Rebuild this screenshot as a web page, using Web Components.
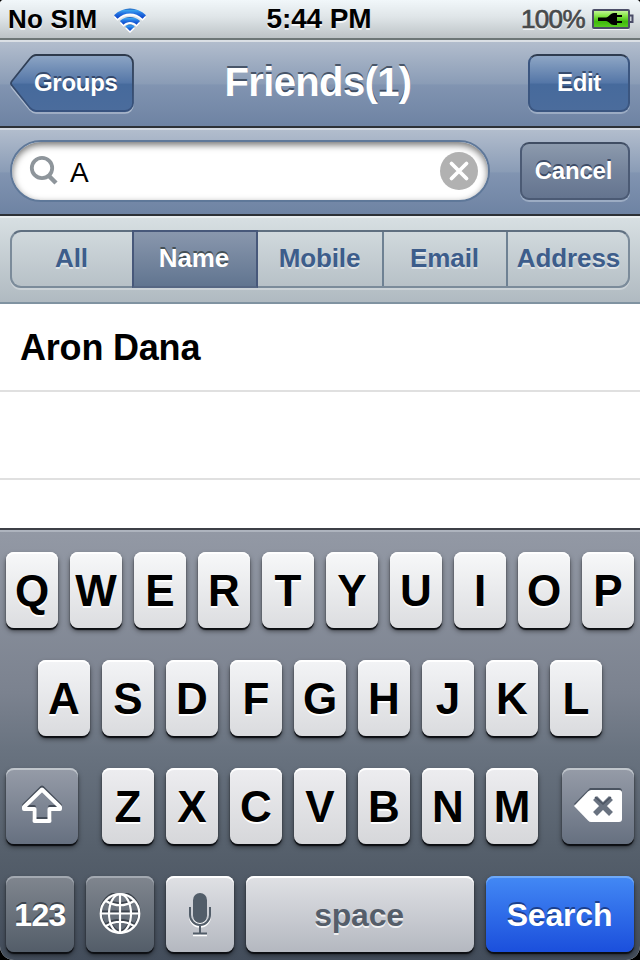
<!DOCTYPE html>
<html lang="en">
<head>
<meta charset="utf-8">
<title>Friends</title>
<style>
  body {
    margin: 0;
    background: #000;
    font-family: "Liberation Sans", Arial, Helvetica, sans-serif;
  }
</style>
</head>
<body>
<phone-screen>
  <status-bar carrier="No SIM" time="5:44 PM" battery="100%"></status-bar>
  <nav-bar>
    <back-button slot="left">Groups</back-button>
    Friends(1)
    <bar-button slot="right" style="width: 102px">Edit</bar-button>
  </nav-bar>
  <search-bar>
    <search-field>A</search-field>
    <bar-button muted style="width: 110px">Cancel</bar-button>
  </search-bar>
  <scope-bar>
    <scope-item>All</scope-item>
    <scope-item selected>Name</scope-item>
    <scope-item>Mobile</scope-item>
    <scope-item>Email</scope-item>
    <scope-item>Address</scope-item>
  </scope-bar>
  <contact-list>
    <contact-row>Aron Dana</contact-row>
    <contact-row></contact-row>
    <contact-row></contact-row>
  </contact-list>
  <key-board></key-board>
</phone-screen>

<script>
function define(name, html) {
  customElements.define(
    name,
    class extends HTMLElement {
      constructor() {
        super();
        this.attachShadow({ mode: "open" }).innerHTML = html;
      }
    }
  );
}

define("phone-screen", `
<style>
  :host {
    display: flex;
    flex-direction: column;
    width: 640px;
    height: 960px;
    overflow: hidden;
    border-radius: 4px 4px 14px 14px;
    background: #fff;
  }
</style>
<slot></slot>
`);

customElements.define(
  "status-bar",
  class extends HTMLElement {
    constructor() {
      super();
      const shadowRoot = this.attachShadow({ mode: "open" });
      shadowRoot.innerHTML = `
<style>
  :host {
    display: grid;
    grid-template-columns: 1fr auto 1fr;
    align-items: center;
    box-sizing: border-box;
    height: 40px;
    padding: 0 6px 0 8px;
    border-bottom: 2px solid #6d7777;
    background: linear-gradient(#f1f7fa, #dfe5e8 45%, #bcc3c6);
    font-weight: bold;
    font-size: 26px;
    line-height: 38px;
    text-shadow: 0 2px 0 rgba(255, 255, 255, .75);
    white-space: nowrap;
  }
  .left, .right { display: flex; align-items: center; }
  .left { letter-spacing: .2px; }
  .left svg { margin: 1px 0 0 16px; }
  .time { font-size: 28px; letter-spacing: -.1px; padding: 0 4px 0 0; }
  .right {
    justify-content: flex-end;
    color: #484a4b;
    font-weight: normal;
    -webkit-text-stroke: .7px #484a4b;
    letter-spacing: -.6px;
  }
  .right svg { margin: 0 0 1px 7px; }
</style>
<div class="left"><span class="carrier"></span>
  <svg width="34" height="26" viewBox="0 0 34 26">
    <defs>
      <linearGradient id="w" x1="0" y1="0" x2="0" y2="1">
        <stop offset="0" stop-color="#1a57b4"/><stop offset=".2" stop-color="#38a0ee"/>
        <stop offset=".5" stop-color="#2272e0"/><stop offset="1" stop-color="#0a40c8"/>
      </linearGradient>
    </defs>
    <g fill="#fff" transform="translate(0 2)">
      <path d="M1 8.200C10 -.8 24 -.8 33 8.200L29.500 11.700C22.500 4.700 11.500 4.700 4.500 11.700z"/>
      <path d="M6.900 14.100C12.500 8.600 21.500 8.600 27.100 14.100L23.500 17.700C20 14.200 14 14.200 10.500 17.700z"/>
      <path d="M12.300 19.400C15 17 19 17 21.700 19.400L17 24z"/>
    </g>
    <g fill="url(#w)">
      <path d="M1 8.200C10 -.8 24 -.8 33 8.200L29.500 11.700C22.500 4.700 11.500 4.700 4.500 11.700z"/>
      <path d="M6.900 14.100C12.500 8.600 21.500 8.600 27.100 14.100L23.500 17.700C20 14.200 14 14.200 10.500 17.700z"/>
      <path d="M12.300 19.400C15 17 19 17 21.700 19.400L17 24z"/>
    </g>
  </svg>
</div>
<span class="time"></span>
<div class="right"><span class="battery"></span>
  <svg width="42" height="22" viewBox="0 0 42 22">
    <defs>
      <linearGradient id="b" x1="0" y1="0" x2="0" y2="1">
        <stop offset="0" stop-color="#cdf5a6"/><stop offset=".3" stop-color="#8be84c"/>
        <stop offset=".65" stop-color="#3fb90c"/><stop offset="1" stop-color="#5ccf25"/>
      </linearGradient>
    </defs>
    <path d="M1 21.500H37" stroke="#fff" opacity=".8"/>
    <rect x="1" y="2" width="36" height="18" rx="1" fill="url(#b)" stroke="#4b4d68" stroke-width="2"/>
    <path d="M38 7.500h2.500v6.500H38" fill="#cdd3d8" stroke="#4b4d68" stroke-width="2"/>
    <path d="M6 9.500h8c3 0 4-4.500 8-4.500h3v2h5v2h-5v4h5v2h-5v2h-3c-4 0-5-4-8-4H6z" fill="#000"/>
  </svg>
</div>
`;
      for (const name of ["carrier", "time", "battery"]) {
        shadowRoot.querySelector("." + name).textContent = this.getAttribute(name);
      }
    }
  }
);

define("nav-bar", `
<style>
  :host {
    display: grid;
    grid-template-columns: 134px 1fr 134px;
    align-items: center;
    box-sizing: border-box;
    height: 88px;
    padding: 0 10px 2px;
    border-top: 2px solid #dbe0e5;
    border-bottom: 2px solid #2d3136;
    background: linear-gradient(#b2bdcd, #8a9cb6 50%, #8194b1 51%, #6e83a3);
  }
  .title {
    color: #fff;
    font-size: 40px;
    line-height: 78px;
    font-weight: bold;
    letter-spacing: -.65px;
    text-align: center;
    text-shadow: 0 -2px 0 rgba(35, 48, 66, .7);
    padding: 0 4px 2px 0;
  }
  .right { display: flex; justify-content: flex-end; }
</style>
<slot name="left"></slot>
<div class="title"><slot></slot></div>
<div class="right"><slot name="right"></slot></div>
`);

define("back-button", `
<style>
  :host {
    display: grid;
    width: 126px;
    height: 60px;
    padding-top: 2px;
    color: #fff;
    font-size: 24px;
    font-weight: bold;
    line-height: 56px;
    text-shadow: 0 -2px 0 rgba(25, 40, 70, .65);
  }
  svg, span { grid-area: 1 / 1; }
  span { padding-left: 24px; letter-spacing: -.3px; padding-top: 1px; }
</style>
<svg width="126" height="60" viewBox="0 0 126 60">
  <defs>
    <linearGradient id="g" x1="0" y1="0" x2="0" y2="1">
      <stop offset="0" stop-color="#8ea6c5"/><stop offset=".5" stop-color="#5476a7"/>
      <stop offset=".52" stop-color="#466a9c"/><stop offset="1" stop-color="#4b6c9c"/>
    </linearGradient>
    <linearGradient id="s" x1="0" y1="0" x2="0" y2="1">
      <stop offset="0" stop-color="#2e3a4c"/><stop offset="1" stop-color="#38537f"/>
    </linearGradient>
  </defs>
  <path d="M26 1H115a8 8 0 0 1 8 8V49a8 8 0 0 1-8 8H26q-3 0-6-3L2.500 32.500Q0 29.500 2.500 26L20 4.500Q23 1 26 1z" transform="translate(0 2)" fill="none" stroke="#c3cddb" stroke-width="1.500" opacity=".7"/>
  <path d="M26 1H115a8 8 0 0 1 8 8V49a8 8 0 0 1-8 8H26q-3 0-6-3L2 31.500Q0 29.500 2 27L20 4.500Q23 1 26 1z" fill="url(#g)" stroke="url(#s)" stroke-width="1.800"/>
</svg>
<span><slot></slot></span>
`);

define("bar-button", `
<style>
  :host {
    display: block;
    box-sizing: border-box;
    height: 58px;
    flex: none;
    border: 2px solid #3b5680;
    border-top-color: #2f3c50;
    border-radius: 9px;
    background: linear-gradient(#8ea6c5, #5476a7 50%, #466a9c 52%, #4b6c9c);
    box-shadow: 0 2px 0 rgba(195, 207, 223, .5);
    color: #fff;
    font-size: 24px;
    font-weight: bold;
    line-height: 54px;
    letter-spacing: -.3px;
    text-align: center;
    text-shadow: 0 -2px 0 rgba(25, 40, 70, .65);
  }
  :host([muted]) {
    border-color: #4b5a74;
    border-top-color: #404d63;
    background: linear-gradient(#8c9aad, #75849c 50%, #64748f);
    letter-spacing: -.2px;
    text-indent: -3px;
  }
</style>
<slot></slot>
`);

define("search-bar", `
<style>
  :host {
    display: flex;
    align-items: center;
    justify-content: space-between;
    box-sizing: border-box;
    height: 88px;
    padding: 0 10px 2px;
    border-top: 2px solid #d3d9e1;
    border-bottom: 2px solid #2d3136;
    background: linear-gradient(#b2bdcd, #8a9cb6 50%, #8194b1 51%, #6e83a3);
  }
</style>
<slot></slot>
`);

define("search-field", `
<style>
  :host {
    display: flex;
    align-items: center;
    box-sizing: border-box;
    width: 480px;
    height: 62px;
    padding: 0 10px 1px 17px;
    border: 2px solid #5f7899;
    border-radius: 31px;
    background: #fff;
    box-shadow: inset 0 3px 7px rgba(0, 0, 0, .55);
    font-size: 28px;
    line-height: 56px;
  }
  span { flex: 1; padding-left: 11px; padding-top: 4px; }
</style>
<svg width="30" height="32" viewBox="0 0 30 32" fill="none" stroke="#8e959b">
  <circle cx="13" cy="13" r="10.200" stroke-width="3.800"/>
  <path d="M19.500 20.500L27 28" stroke-width="4.500"/>
</svg>
<span><slot></slot></span>
<svg width="38" height="38" viewBox="0 0 38 38">
  <circle cx="19" cy="19" r="19" fill="#b1b1b1"/>
  <path d="M11.500 11.500l15 15m0-15l-15 15" stroke="#fff" stroke-width="3.800" stroke-linecap="round"/>
</svg>
`);

define("scope-bar", `
<style>
  :host {
    display: block;
    box-sizing: border-box;
    height: 88px;
    padding: 12px 10px;
    border-top: 2px solid #e8edef;
    border-bottom: 2px solid #8093a1;
    background: linear-gradient(#d7dfe2, #b0bac1);
  }
  .group {
    display: grid;
    grid-template-columns: 120px 126px 126px 124px 1fr;
    box-sizing: border-box;
    height: 58px;
    border: 2px solid #7b8b9a;
    border-top-color: #5f6f80;
    border-radius: 11px;
    box-shadow: 0 2px 0 rgba(255, 255, 255, .3);
  }
</style>
<div class="group"><slot></slot></div>
`);

define("scope-item", `
<style>
  :host {
    display: block;
    box-sizing: border-box;
    color: #3d5d8b;
    border-right: 2px solid #6e8193;
    font-size: 26px;
    font-weight: bold;
    line-height: 52px;
    letter-spacing: -.1px;
    text-align: center;
    text-indent: -1px;
    text-shadow: 0 2px 0 rgba(255, 255, 255, .5);
    white-space: nowrap;
  }
  :host(:first-child), :host(:last-child) { border-right: none; }
  :host(:last-child) { padding-left: 2px; }
  :host([selected]) {
    margin: -2px 0;
    padding-right: 1px;
    border: 2px solid #47587a;
    border-bottom-color: #566783;
    background: linear-gradient(#8997ad, #617590);
    color: #fff;
    text-shadow: 0 -2px 0 rgba(50, 60, 60, .75);
  }
</style>
<slot></slot>
`);

define("contact-list", `
<style>
  :host {
    display: block;
    height: 224px;
    overflow: hidden;
    background: #fff;
  }
</style>
<slot></slot>
`);

define("contact-row", `
<style>
  :host {
    display: block;
    box-sizing: border-box;
    height: 88px;
    padding: 1px 20px 0;
    border-bottom: 2px solid #e0e0e0;
    font-size: 36px;
    font-weight: bold;
    line-height: 86px;
    letter-spacing: -.2px;
  }
</style>
<slot></slot>
`);

define("key-cap", `
<style>
  :host {
    --edge: #fff;
    display: flex;
    align-items: center;
    justify-content: center;
    box-sizing: border-box;
    width: 52px;
    height: 76px;
    padding-top: 2px;
    border-radius: 8px;
    background: linear-gradient(var(--top, #f7f8f9), var(--bottom, #dcdde0));
    box-shadow: inset 0 2px 0 var(--edge), 0 2px 1px #0c0e12, 0 3px 5px rgba(0, 0, 0, .5);
    color: #000;
    font-size: 44px;
    font-weight: bold;
    text-shadow: 0 2px 0 #fff;
  }
  :host([kind]) { width: 68px; font-size: 32px; }
  :host([kind="dark"]) {
    --top: #80868f;
    --bottom: #535d69;
    --edge: #a3a9b1;
    color: #fff;
    letter-spacing: -.6px;
    text-shadow: 0 -2px 0 #3c434c;
  }
  :host([kind="wide"]) {
    --top: #969ca8;
    --bottom: #667080;
    --edge: #c0c6cc;
    width: 72px;
    padding: 0 0 2px;
  }
  :host([kind="mic"]), :host([kind="space"]) {
    --top: #e0e1e5;
    --bottom: #b4b8c0;
    color: #555e6a;
    text-shadow: 0 2px 0 rgba(255, 255, 255, .8);
  }
  :host([kind="space"]) { width: 228px; letter-spacing: -.2px; padding-right: 2px; }
  :host([kind="search"]) {
    --top: #4389f5;
    --bottom: #1b4fdc;
    --edge: #6fa9f8;
    width: 148px;
    padding-right: 1px;
    color: #fff;
    letter-spacing: -.2px;
    text-shadow: 0 -2px 0 #1b3f8e;
  }
</style>
<slot></slot>
`);

const shiftIcon = `
<svg width="44" height="40" viewBox="0 0 44 40" fill="none" stroke-width="4" stroke-linejoin="round">
  <path d="M22 3.500L4 21.500V23H14V35H30V23H40V21.500z" transform="translate(0 -1)" stroke="#444c58"/>
  <path d="M22 4.500L4 22V24H14.500V36H29.500V24H40V22z" stroke="#fff"/>
</svg>`;

const deleteIcon = `
<svg width="48" height="34" viewBox="0 0 48 34">
  <path d="M16 0H45a3 3 0 0 1 3 3V30H16L0 16z" fill="#4a5360"/>
  <path d="M17 2H45a3 3 0 0 1 3 3V31a3 3 0 0 1-3 3H17q-1.500 0-3-1.500L.5 18.500v-1L14 3.500Q15.500 2 17 2z" fill="#fff"/>
  <path d="M21 10l16 16m0-16l-16 16" stroke="#697280" stroke-width="5.500"/>
  <path d="M21 9l8 7 8-7" fill="none" stroke="#4c5563" stroke-width="1.500"/>
</svg>`;

const globe = `
  <circle cx="21" cy="20.500" r="19.300"/>
  <ellipse cx="21" cy="20.500" rx="11" ry="19.300"/>
  <path d="M21 1.500V40M1.500 20.500H40.500M7 8Q21 16.500 35 8M7 33Q21 24.500 35 33"/>`;

const globeIcon = `
<svg width="42" height="44" viewBox="0 0 42 44" fill="none" stroke-width="2.200">
  <g stroke="#3c434c" transform="translate(0 -1.800)">${globe}</g>
  <g stroke="#fff">${globe}</g>
</svg>`;

const mic = `
  <rect x="5" y="0" width="14" height="30" rx="7" stroke="none"/>
  <path d="M2 14V22a10 10 0 0 0 20 0V14M12 32V40M5 40.500H19" fill="none" stroke-width="2"/>`;

const micIcon = `
<svg width="24" height="44" viewBox="0 0 24 44">
  <g fill="#fff" stroke="#fff" transform="translate(0 1.800)">${mic}</g>
  <g fill="#525d69" stroke="#525d69">${mic}</g>
</svg>`;

const letters = (text) =>
  [...text].map((letter) => `<key-cap>${letter}</key-cap>`).join("");

define("key-board", `
<style>
  :host {
    display: flex;
    flex-direction: column;
    gap: 32px;
    box-sizing: border-box;
    height: 432px;
    padding: 22px 6px 0;
    border-top: 2px solid #3d4047;
    box-shadow: inset 0 2px 0 #aeb4be;
    background: linear-gradient(#9399a5, #7b828f 38%, #697380 51%, #56606c 74%, #434d5b);
  }
  .row { display: flex; justify-content: center; gap: 12px; }
  .spread { justify-content: space-between; }
  .home { --top: #f3f4f6; --bottom: #dadbde; }
  .lower { --top: #ededf0; --bottom: #d6d7da; }
  svg { display: block; }
</style>
<div class="row">${letters("QWERTYUIOP")}</div>
<div class="row home">${letters("ASDFGHJKL")}</div>
<div class="row spread">
  <key-cap kind="wide">${shiftIcon}</key-cap>
  <div class="row lower">${letters("ZXCVBNM")}</div>
  <key-cap kind="wide">${deleteIcon}</key-cap>
</div>
<div class="row">
  <key-cap kind="dark">123</key-cap>
  <key-cap kind="dark">${globeIcon}</key-cap>
  <key-cap kind="mic">${micIcon}</key-cap>
  <key-cap kind="space">space</key-cap>
  <key-cap kind="search">Search</key-cap>
</div>
`);
</script>
</body>
</html>
